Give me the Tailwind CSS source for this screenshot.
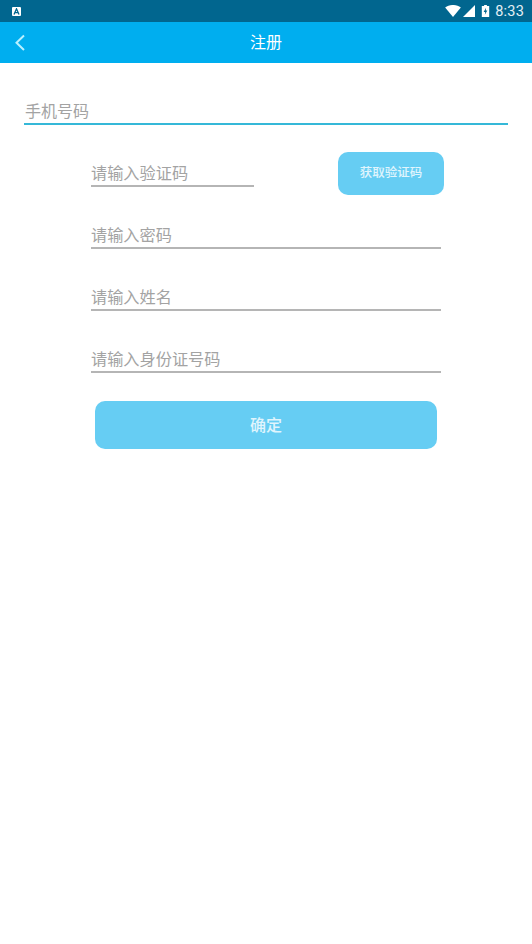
<!DOCTYPE html>
<html lang="zh-CN">
<head>
<meta charset="utf-8">
<script src="https://cdn.jsdelivr.net/npm/@tailwindcss/browser@4"></script>
</head>
<body class="bg-white font-['Roboto','Noto_Sans_CJK_SC',sans-serif]">
<div class="w-[532px] h-[944px] bg-white flex flex-col">
  <div class="h-[22px] bg-[#01668f] flex items-center justify-between pl-[12px] pr-[8px]">
    <div class="w-[9px] h-[9px] bg-white rounded-[1px] flex items-center justify-center">
      <svg width="7" height="7" viewBox="0 0 7 7"><path d="M1 6.500 3.500 .8 6 6.500M2 4.600H5" fill="none" stroke="#01668f" stroke-width="1.300"/></svg>
    </div>
    <div class="flex items-center">
      <svg width="16" height="12" viewBox="0 0 17 13"><path d="M0 2.600C4.800-.9 12.200-.9 17 2.600L8.500 13Z" fill="#fff"/></svg>
      <svg width="12" height="12" viewBox="0 0 12 12" class="ml-[2px]"><path d="M12 0V12H0Z" fill="#fff"/></svg>
      <svg width="9" height="12" viewBox="0 0 8 13" class="ml-[6px]"><path fill-rule="evenodd" d="M2.500 0H5.500V1H8V13H0V1H2.500ZM4.600 3 2 7.500H3.700L3.300 10.500 6 6H4.300Z" fill="#fff"/></svg>
      <span class="ml-[5px] pt-[1px] text-[14.500px] leading-[22px] text-white/90 tracking-[0.2px]">8:33</span>
    </div>
  </div>
  <div class="relative h-[41px] bg-[#00aeef] flex items-center justify-center">
    <svg width="12" height="18" viewBox="0 0 12 18" class="absolute left-[14px] top-[12px]"><path d="M10 1.500 2.500 8.700 10 16" fill="none" stroke="#b9f0ff" stroke-width="2"/></svg>
    <span class="text-[16px] text-white">注册</span>
  </div>

  <div class="mt-[38px] ml-[24px] w-[484px] h-[24px] pl-[1px] flex items-center border-b-2 border-[#35b8d8] text-[16px] leading-[22px] text-[#a3a3a3]">手机号码</div>

  <div class="ml-[91px] mt-[27px] flex items-start">
    <div class="w-[163px] mt-[11px] h-[24px] flex items-center border-b-2 border-[#b5b5b5] text-[16.200px] text-[#a3a3a3]">请输入验证码</div>
    <button class="ml-[84px] w-[106px] h-[43px] rounded-[10px] bg-[#66cdf3] text-[12.500px] font-medium text-white/80">获取验证码</button>
  </div>

  <div class="ml-[91px] mt-[30px] flex flex-col gap-[38px] w-[350px]">
    <div class="h-[24px] flex items-center border-b-2 border-[#b5b5b5] text-[16.200px] text-[#a3a3a3]">请输入密码</div>
    <div class="h-[24px] flex items-center border-b-2 border-[#b5b5b5] text-[16.200px] text-[#a3a3a3]">请输入姓名</div>
    <div class="h-[24px] flex items-center border-b-2 border-[#b5b5b5] text-[16.200px] text-[#a3a3a3]">请输入身份证号码</div>
  </div>

  <button class="ml-[95px] mt-[28px] w-[342px] h-[48px] pt-[1px] rounded-[10px] bg-[#66cdf3] text-[16px] font-medium text-white/80">确定</button>
</div>
</body>
</html>
